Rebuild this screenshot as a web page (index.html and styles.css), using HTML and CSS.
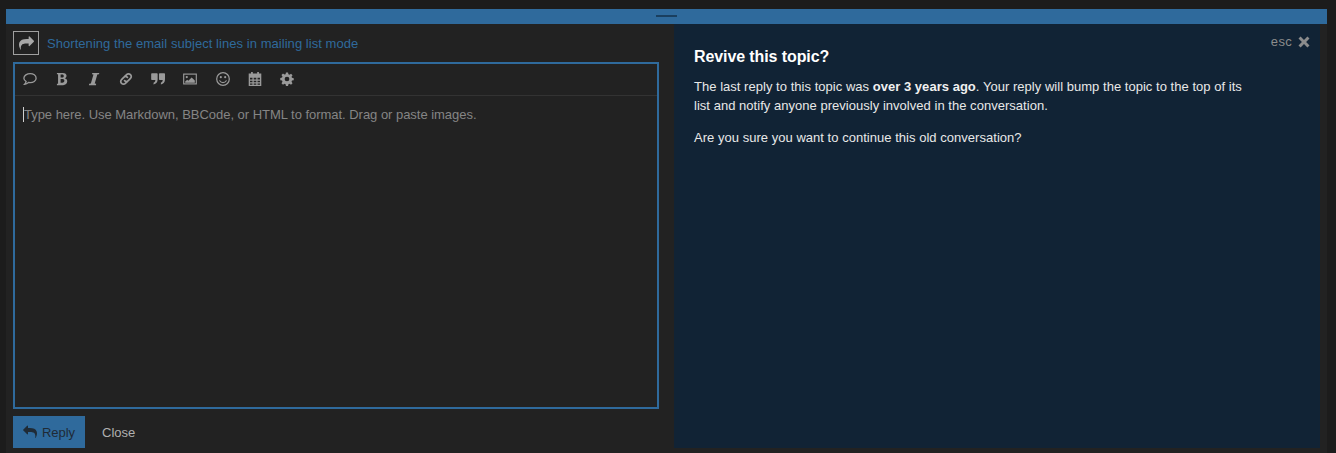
FILE: index.html
```html
<!DOCTYPE html>
<html lang="en">
<head>
<meta charset="utf-8">
<title>Revive this topic?</title>
<link rel="stylesheet" href="styles.css">
</head>
<body>
<div class="composer">
  <div class="grip-bar"><span class="grip"></span></div>
  <div class="panels">
    <main class="editor-col">
      <div class="title-row">
        <button class="action-btn" aria-label="Reply options">
          <svg viewBox="0 0 1792 1792" width="15" height="15"><path fill="currentColor" d="M1792 640q0 26-19 45l-512 512q-19 19-45 19t-45-19-19-45v-256h-224q-98 0-175.500 6t-154 21.500-133 42.500-105.500 69.500-79.500 95.500-48 129-17.500 161q0 55 5 123 0 6 2.500 23.500t2.500 26.500q0 15-8.500 25t-23.500 10q-16 0-28-17-7-9-13-22t-13.500-30-10.500-24q-127-285-127-451 0-199 53-333 162-403 875-403h224v-256q0-26 19-45t45-19 45 19l512 512q19 19 19 45z"/></svg>
        </button>
        <a class="topic-link" href="#">Shortening the email subject lines in mailing list mode</a>
      </div>
      <div class="editor">
        <div class="toolbar">
          <svg class="tool" viewBox="0 0 16 16"><path fill="none" stroke="currentColor" stroke-width="1.500" d="M8.200 1.800c3.500 0 6.800 2.100 6.800 5.200s-3.300 5.200-6.800 5.200c-.7 0-1.300-.1-1.900-.2-1 .9-2.700 1.900-4.400 2 .8-.8 1.500-2 1.700-3.200C2 9.700 1 8.500 1 7c0-3.100 3.700-5.200 7.200-5.200z"/></svg>
          <svg class="tool" viewBox="0 0 16 16"><path fill="currentColor" fill-rule="evenodd" d="M2.200 1h6.800c2.700 0 4.200 1.300 4.200 3.300 0 1.400-.8 2.400-2.100 2.900 1.800.4 2.900 1.600 2.900 3.400 0 2.700-2 4.400-4.700 4.400H2.200v-1.500l1.300-.2V2.700l-1.300-.2V1zm4.200 1.900v3.500h1.700c1.300 0 1.900-.7 1.900-1.800S9.400 2.900 8.200 2.900H6.400zm0 5.200v4.100h2c1.500 0 2.300-.8 2.300-2.100 0-1.300-.9-2-2.500-2H6.400z"/></svg>
          <svg class="tool" viewBox="0 0 16 16"><path fill="currentColor" d="M6 1h8l-.3 1.500-1.900.4-3 10.200 1.700.4-.3 1.500H2.200l.3-1.500 1.900-.4 3-10.200-1.700-.4z"/></svg>
          <svg class="tool" viewBox="0 0 16 16"><g fill="none" stroke="currentColor" stroke-width="2" stroke-linecap="round"><path d="M6.700 5l2-2a3 3 0 0 1 4.300 0l.1.100a3 3 0 0 1 0 4.300l-2.500 2.500a3 3 0 0 1-4.200 0"/><path d="M9.300 11l-2 2a3 3 0 0 1-4.300 0l-.1-.1a3 3 0 0 1 0-4.300l2.500-2.500a3 3 0 0 1 4.200 0"/></g></svg>
          <svg class="tool" viewBox="0 0 16 16"><path fill="currentColor" d="M1 1.500h5.800c.5 0 .8.300.8.800v6.100c0 3.200-1.600 5.300-4.700 6v-2.200c1.300-.5 2-1.500 2.100-3H1c-.5 0-.8-.3-.8-.8V2.300c0-.5.3-.8.800-.8zm8.900 0h5.300c.5 0 .8.300.8.800v6.100c0 3.200-1.600 5.300-4.700 6v-2.200c1.300-.5 2-1.500 2.100-3H9.900c-.5 0-.8-.3-.8-.8V2.300c0-.5.3-.8.800-.8z"/></svg>
          <svg class="tool" viewBox="0 0 16 16"><rect x=".8" y="2.400" width="14.400" height="11.200" fill="none" stroke="currentColor" stroke-width="1.300"/><circle cx="4.300" cy="5.800" r="1.300" fill="currentColor"/><path fill="currentColor" d="M2.500 12.200v-1.400l2.300-2 1.300 1.100 3.800-3.600 3.600 3.400v2.500z"/></svg>
          <svg class="tool" viewBox="0 0 16 16"><circle cx="8" cy="8" r="7.200" fill="none" stroke="currentColor" stroke-width="1.400"/><circle cx="5.500" cy="5.900" r="1.200" fill="currentColor"/><circle cx="10.500" cy="5.900" r="1.200" fill="currentColor"/><path fill="none" stroke="currentColor" stroke-width="1.300" stroke-linecap="round" d="M4.300 10c.8 1.400 2.100 2.100 3.700 2.100s2.900-.7 3.700-2.100"/></svg>
          <svg class="tool" viewBox="0 0 16 16"><path fill="currentColor" fill-rule="evenodd" d="M3.500 0h2v1.800h5V0h2v1.800h2.700V16H.8V1.800h2.700V0zM2.300 6.500v2.200h2.800V6.500H2.300zm4.200 0v2.200h3V6.500h-3zm4.400 0v2.200h2.800V6.500h-2.800zM2.300 10v1.800h2.800V10H2.300zm4.200 0v1.800h3V10h-3zm4.400 0v1.800h2.800V10h-2.800zm-8.600 3.100v1.400h2.800v-1.400H2.300zm4.200 0v1.400h3v-1.400h-3zm4.400 0v1.400h2.800v-1.400h-2.800z"/></svg>
          <svg class="tool" viewBox="0 0 16 16"><path fill="currentColor" fill-rule="evenodd" d="M6.800 .5h2.400l.4 2 1.300.5 1.700-1.100 1.700 1.700-1.100 1.700.5 1.300 2 .4v2.400l-2 .4-.5 1.300 1.100 1.700-1.700 1.700-1.700-1.100-1.300.5-.4 2H6.800l-.4-2-1.300-.5-1.700 1.100-1.700-1.700 1.100-1.700-.5-1.300-2-.4V6.800l2-.4.5-1.300-1.100-1.700 1.700-1.700 1.700 1.100L6.400 2.500zM8 5.300a2.700 2.700 0 1 0 0 5.400 2.700 2.700 0 0 0 0-5.400z"/></svg>
        </div>
        <div class="input-area"><span class="caret"></span><span class="placeholder">Type here. Use Markdown, BBCode, or HTML to format. Drag or paste images.</span></div>
      </div>
      <div class="actions">
        <button class="reply-btn">
          <svg viewBox="0 0 1792 1792" width="14" height="14"><path fill="currentColor" d="M1792 1120q0 166-127 451-3 7-10.500 24t-13.500 30-13 22q-12 17-28 17-15 0-23.500-10t-8.500-25q0-9 2.500-26.500t2.500-23.500q5-68 5-123 0-101-17.500-181t-48.500-138.500-80-101-105.500-69.500-133-42.500-154-21.500-175.500-6h-224v256q0 26-19 45t-45 19-45-19l-512-512q-19-19-19-45t19-45l512-512q19-19 45-19t45 19 19 45v256h224q713 0 875 403 53 134 53 333z"/></svg>
          <span>Reply</span>
        </button>
        <a class="close-link" href="#">Close</a>
      </div>
    </main>
    <aside class="notice">
      <div class="esc"><span>esc</span>
        <svg viewBox="0 0 12 12" width="12" height="12"><path fill="currentColor" d="M2.600.5L6 3.900 9.400.5l2.100 2.100L8.100 6l3.400 3.400-2.100 2.100L6 8.100l-3.400 3.400-2.100-2.100L3.900 6 .5 2.600z"/></svg>
      </div>
      <h2>Revive this topic?</h2>
      <p>The last reply to this topic was <strong>over 3 years ago</strong>. Your reply will bump the topic to the top of its list and notify anyone previously involved in the conversation.</p>
      <p>Are you sure you want to continue this old conversation?</p>
    </aside>
  </div>
</div>
</body>
</html>
```
FILE: styles.css
```css
* { box-sizing: border-box; }
html, body { height: 100%; }
body {
  margin: 0;
  background: #1c1c1c;
  font-family: "Liberation Sans", Arial, sans-serif;
  font-size: 13px;
  overflow: hidden;
}
.composer {
  margin: 9px 9px 0 6px;
  height: 444px;
  background: #222222;
  display: flex;
  flex-direction: column;
}
.grip-bar {
  height: 15px;
  background: #2f6a9c;
  display: flex;
  justify-content: center;
  padding-top: 6px;
  flex: none;
}
.grip {
  width: 21px;
  height: 2px;
  background: #1a3f5f;
}
.panels {
  flex: 1;
  display: flex;
  min-height: 0;
}
.editor-col {
  width: 668px;
  padding: 7px 15px 5px 7px;
  display: flex;
  flex-direction: column;
  flex: none;
}
.title-row {
  display: flex;
  align-items: center;
  gap: 8px;
  height: 24px;
  margin-bottom: 7px;
}
.action-btn {
  width: 26px;
  height: 24px;
  padding: 0;
  background: transparent;
  border: 1px solid #a0a0a0;
  color: #a8a8a8;
  display: flex;
  align-items: center;
  justify-content: center;
}
.topic-link {
  color: #2f6a9c;
  text-decoration: none;
  letter-spacing: .05px;
}
.editor {
  flex: 1;
  border: 2px solid #2f6a9c;
  display: flex;
  flex-direction: column;
  min-height: 0;
}
.toolbar {
  height: 32px;
  border-bottom: 1px solid #333333;
  display: flex;
  align-items: center;
  gap: 18.100px;
  padding: 0 0 2px 8px;
  color: #9a9a9a;
  flex: none;
}
.tool {
  width: 14px;
  height: 14px;
  flex: none;
}
.input-area {
  flex: 1;
  display: flex;
  align-items: flex-start;
  padding: 11px 0 0 8px;
}
.caret {
  width: 1px;
  height: 15px;
  background: #d0d0d0;
  flex: none;
}
.placeholder {
  color: #858585;
  line-height: 15px;
  letter-spacing: -.03px;
}
.actions {
  display: flex;
  align-items: center;
  margin-top: 7px;
  height: 32px;
  flex: none;
}
.reply-btn {
  width: 72px;
  height: 32px;
  background: #2f6a9c;
  border: 0;
  padding: 0;
  color: #1f2b36;
  font: inherit;
  display: flex;
  align-items: center;
  justify-content: center;
  gap: 5px;
}
.close-link {
  margin-left: 17px;
  color: #b0b0b0;
  text-decoration: none;
}
.notice {
  flex: none;
  width: 646px;
  height: 424px;
  background: #112335;
  color: #e8e8e8;
  padding: 24px 20px 0;
  position: relative;
}
.esc {
  position: absolute;
  top: 10px;
  right: 10px;
  display: flex;
  align-items: center;
  gap: 6px;
  color: #8c8c8c;
  letter-spacing: .3px;
}
.notice h2 {
  margin: 0 0 11px;
  font-size: 16px;
  line-height: 18px;
  letter-spacing: -.1px;
  color: #ffffff;
  font-weight: 700;
}
.notice p {
  margin: 0 0 13px;
  width: 560px;
  line-height: 19px;
  letter-spacing: .03px;
}
.notice strong { color: #f0f0f0; }
```
